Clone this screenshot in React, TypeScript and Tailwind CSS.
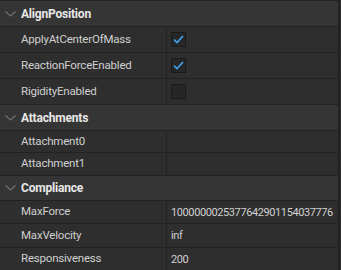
import React from 'react';

type Row = { name: string; value?: string; check?: boolean; h: string };
type Section = { title: string; h: string; rows: Row[] };

const sections: Section[] = [
  {
    title: 'AlignPosition',
    h: 'h-[26px]',
    rows: [
      { name: 'ApplyAtCenterOfMass', check: true, h: 'h-[26px]' },
      { name: 'ReactionForceEnabled', check: true, h: 'h-[26px]' },
      { name: 'RigidityEnabled', check: false, h: 'h-[26px]' },
    ],
  },
  {
    title: 'Attachments',
    h: 'h-[26px]',
    rows: [
      { name: 'Attachment0', value: '', h: 'h-[22px]' },
      { name: 'Attachment1', value: '', h: 'h-[23px]' },
    ],
  },
  {
    title: 'Compliance',
    h: 'h-[25px]',
    rows: [
      { name: 'MaxForce', value: '1000000025377642901154037776', h: 'h-[23px]' },
      { name: 'MaxVelocity', value: 'inf', h: 'h-[24px]' },
      { name: 'Responsiveness', value: '200', h: 'h-[23px]' },
    ],
  },
];

function Chevron() {
  return (
    <svg width="11" height="6" viewBox="0 0 11 6" className="shrink-0">
      <path d="M0.5 0.5 L5.5 5 L10.5 0.5" fill="none" stroke="#747474" strokeWidth="1.1" />
    </svg>
  );
}

function CheckBox({ on }: { on: boolean }) {
  return (
    <div className="w-[15px] h-[15px] bg-[#262626] border border-[#1a1a1a] flex items-center justify-center">
      {on && (
        <svg width="11" height="9" viewBox="0 0 11 9">
          <path d="M1 4.5 L4 7.5 L10 1" fill="none" stroke="#3ea6f2" strokeWidth="1.6" />
        </svg>
      )}
    </div>
  );
}

function PropRow({ row }: { row: Row }) {
  return (
    <div className={`${row.h} flex border-b border-[#222222] bg-[#2e2e2e]`}>
      <div className="w-[167px] shrink-0 flex items-center pl-[21px] border-r border-[#222222] text-[#d0d0d0] text-[11.5px] tracking-[-0.2px]">
        {row.name}
      </div>
      <div className="flex-1 flex items-center pl-[4px] text-[#d0d0d0] text-[11px] tracking-[-0.4px] whitespace-nowrap">
        {row.check !== undefined ? <CheckBox on={row.check} /> : row.value}
      </div>
    </div>
  );
}

export default function App() {
  return (
    <div
      className="w-[341px] h-[270px] overflow-hidden bg-[#2e2e2e] text-[12px] leading-none"
      style={{ fontFamily: 'Roboto, "Open Sans", sans-serif' }}
    >
      <div className="w-[340px] border-t border-r-2 border-[#222222]">
        {sections.map((s) => (
          <div key={s.title}>
            <div className={`${s.h} flex items-center gap-[5px] pl-[5px] bg-[#353535] border-b border-[#222222]`}>
              <Chevron />
              <span className="font-bold text-[#e8e8e8] tracking-[-0.2px]">{s.title}</span>
            </div>
            {s.rows.map((r) => (
              <PropRow key={r.name} row={r} />
            ))}
          </div>
        ))}
      </div>
    </div>
  );
}
